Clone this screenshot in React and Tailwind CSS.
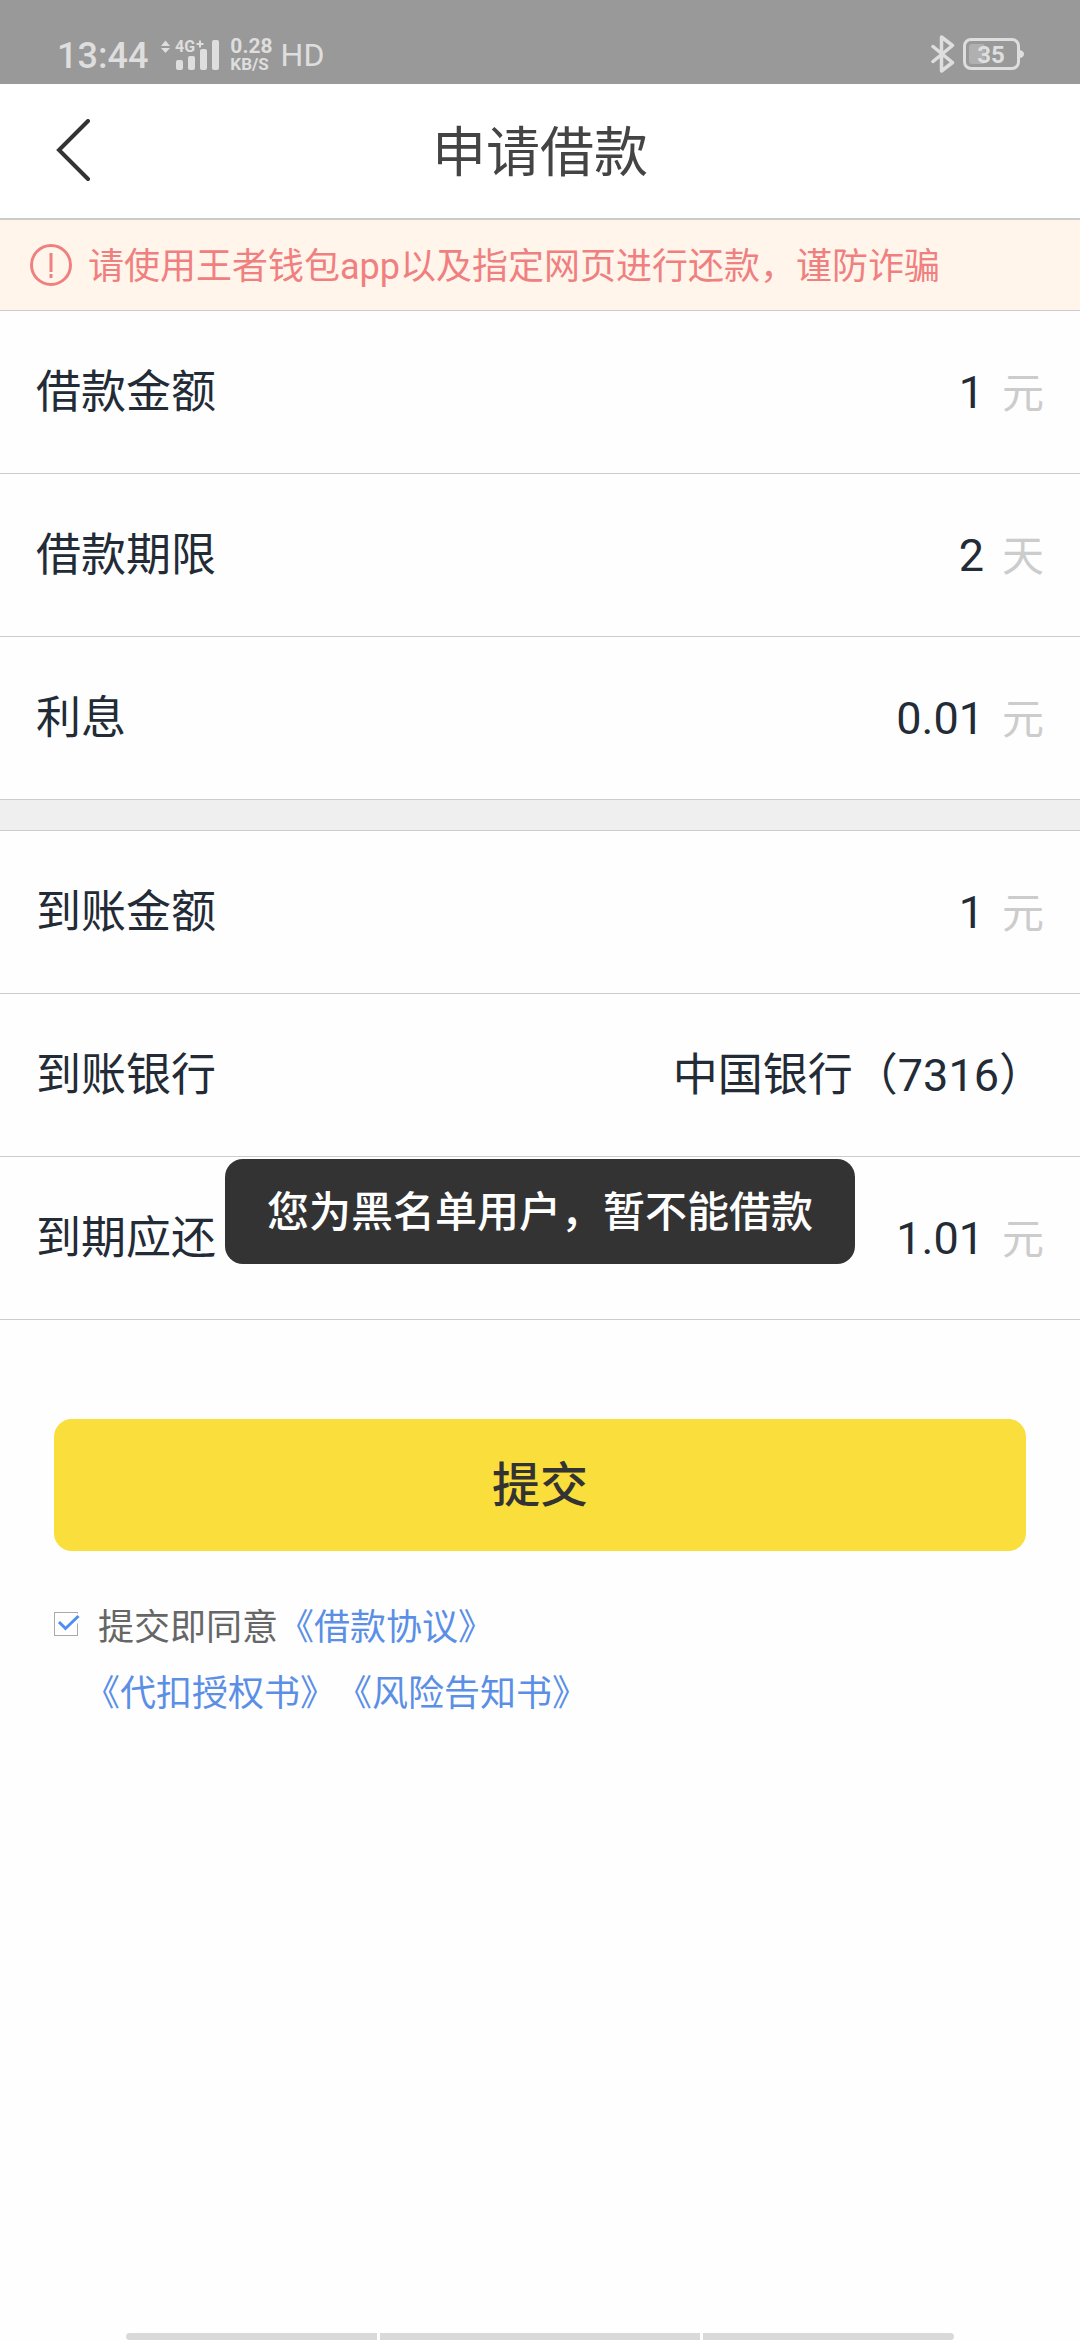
import { useState } from "react";

const loanRows = [
  { label: "借款金额", value: "1", unit: "元" },
  { label: "借款期限", value: "2", unit: "天" },
  { label: "利息", value: "0.01", unit: "元" },
];

const accountRows = [
  { label: "到账金额", value: "1", unit: "元" },
  { label: "到账银行", value: "中国银行（7316）" },
  { label: "到期应还", value: "1.01", unit: "元" },
];

function StatusBar() {
  return (
    <div className="h-[84px] bg-[#999999] text-[#dedede] flex items-end justify-between pl-[57px] pr-14 pb-2.5">
      <div className="flex items-center h-10">
        <span className="pt-1 text-[36px] font-medium leading-10">13:44</span>
        <svg className="ml-3 w-[60px] h-8" viewBox="0 0 60 32" fill="currentColor">
          <path d="M1 8 5.500 2.500 10 8zM1 10h9l-4.500 5z" />
          <text x="15" y="14" fontSize="16" fontWeight="700">4G</text>
          <path d="M39 2.500h2v2.500h2.500v2H41v2.500h-2V7h-2.500V5H39z" />
          <rect x="16" y="22" width="7" height="10" rx="2" />
          <rect x="28" y="18" width="7" height="14" rx="2" />
          <rect x="40" y="11" width="7" height="21" rx="2" />
          <rect x="52" y="2" width="7" height="30" rx="2" />
        </svg>
        <div className="ml-2.5 pt-0.5 flex flex-col font-bold">
          <span className="text-[21px] leading-[18px]">0.28</span>
          <span className="text-[17px] leading-[18px]">KB/S</span>
        </div>
        <span className="ml-2 pt-0.5 text-[32px] leading-10">HD</span>
      </div>
      <div className="flex items-center h-10 gap-2">
        <svg className="w-6 h-[38px]" viewBox="0 0 24 38" fill="none" stroke="currentColor" strokeWidth="3.500" strokeLinejoin="round" strokeLinecap="round">
          <path d="M2 11.500 21.500 27.500 10.500 36V2L21.500 10.500 2 26.500" />
        </svg>
        <svg className="w-[61px] h-8" viewBox="0 0 61 32">
          <rect x="1.500" y="1.500" width="54" height="29" rx="6.500" fill="none" stroke="currentColor" strokeWidth="3" />
          <path d="M57 12q4 1 4 4t-4 4z" fill="currentColor" />
          <rect x="6" y="6" width="16" height="20" rx="3" fill="#b0b0b0" />
          <text x="28" y="25" fontSize="24" fontWeight="700" textAnchor="middle" fill="currentColor">35</text>
        </svg>
      </div>
    </div>
  );
}

function Row({ label, value, unit }) {
  return (
    <div className="flex items-baseline justify-between px-9 pt-[51px] pb-[49px] border-b border-[#cccccc] text-[45px] leading-[62px] text-[#222b36]">
      <dt>{label}</dt>
      <dd className="flex items-baseline gap-[18px]">
        {value}
        {unit && <span className="text-[42px] leading-none text-[#cccccc]">{unit}</span>}
      </dd>
    </div>
  );
}

export default function App() {
  const [agreed, setAgreed] = useState(true);

  return (
    <div className="min-h-screen flex flex-col bg-[#fefefe] font-[Roboto,'Noto_Sans_CJK_SC',sans-serif]">
      <StatusBar />

      <header className="h-[136px] grid grid-cols-[1fr_auto_1fr] items-center px-12 bg-white border-b-2 border-[#cccccc]">
        <button aria-label="返回" className="w-12 h-16 text-[#333333]">
          <svg className="w-12 h-16" viewBox="0 0 48 64" fill="none" stroke="currentColor" strokeWidth="4" strokeLinecap="round">
            <path d="M40 2 11 31l29 29" />
          </svg>
        </button>
        <h1 className="pt-1.5 text-[54px] leading-[80px] text-[#444444]">申请借款</h1>
      </header>

      <div className="h-[91px] flex items-center gap-4 px-[30px] bg-[#fff5eb] border-b border-[#cccccc] text-[#f08080]">
        <svg className="w-[42px] h-[42px] shrink-0" viewBox="0 0 42 42" fill="none" stroke="currentColor" strokeWidth="3">
          <circle cx="21" cy="21" r="19.500" />
          <path d="M21 9v19M21 30v4" />
        </svg>
        <p className="pt-1 text-[36px] leading-[54px]">请使用王者钱包app以及指定网页进行还款，谨防诈骗</p>
      </div>

      <dl>
        {loanRows.map((r) => <Row key={r.label} {...r} />)}
      </dl>
      <div className="h-[31px] bg-[#efefef] border-b border-[#cccccc]" />
      <dl>
        {accountRows.map((r) => <Row key={r.label} {...r} />)}
      </dl>

      <div className="px-[54px] pt-[99px]">
        <button className="w-full h-[132px] pt-0.5 rounded-[18px] bg-[#fade3c] text-[48px] font-medium text-[#333333]">
          提交
        </button>

        {/* Agreement */}
        <div className="mt-11 text-[36px] leading-[66px] text-[#5b8fe6]">
          <div className="flex items-center">
            <span className="relative w-6 h-6 mr-5 mb-2">
              <input id="agree" type="checkbox" checked={agreed} onChange={(e) => setAgreed(e.target.checked)}
                className="block appearance-none w-6 h-6 border border-[#aaaaaa] bg-white" />
              {agreed && (
                <svg className="absolute left-0 top-0 w-[26px] h-6 pointer-events-none" viewBox="0 0 26 24" fill="none">
                  <path d="M22 1.500h3v10h-3z" fill="#fefefe" />
                  <path d="M5 10l6.500 6.500L24.500 4" stroke="#4f8ef0" strokeWidth="3" />
                </svg>
              )}
            </span>
            <label htmlFor="agree" className="text-[#666666]">提交即同意</label>
            <a href="#loan">《借款协议》</a>
          </div>
          <div className="flex pl-[30px]">
            <a href="#withhold">《代扣授权书》</a>
            <a href="#risk">《风险告知书》</a>
          </div>
        </div>
      </div>

      {/* Gesture bar */}
      <div className="mt-auto flex justify-center gap-[3px]">
        <span className="w-[251px] h-[7px] bg-[#d9d9d9] rounded-l" />
        <span className="w-[320px] h-[7px] bg-[#d9d9d9]" />
        <span className="w-[251px] h-[7px] bg-[#d9d9d9] rounded-r" />
      </div>

      {/* Toast */}
      <div role="alert" className="fixed top-[1159px] left-1/2 -translate-x-1/2 whitespace-nowrap px-[42px] pt-[21px] pb-[19px] rounded-[18px] bg-[#333333] text-white text-[42px] leading-[65px] font-medium">
        您为黑名单用户，暂不能借款
      </div>
    </div>
  );
}
